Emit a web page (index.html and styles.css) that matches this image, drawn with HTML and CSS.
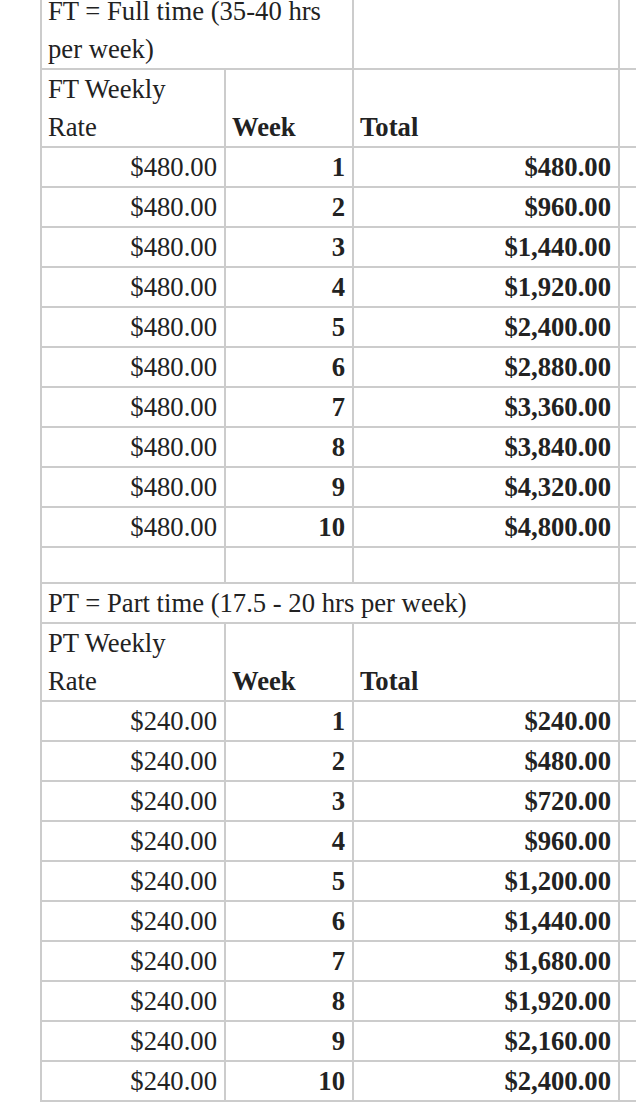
FILE: index.html
```html
<!DOCTYPE html>
<html lang="en">
<head>
<meta charset="utf-8">
<title>FT / PT weekly rates</title>
<link rel="stylesheet" href="styles.css">
</head>
<body>
<div class="sheet">
<table class="rates">
  <colgroup>
    <col class="c-rate">
    <col class="c-week">
    <col class="c-total">
    <col class="c-extra">
  </colgroup>
  <tbody>
    <tr><td colspan="2">FT = Full time (35-40 hrs per week)</td><td></td><td></td></tr>
    <tr><td>FT Weekly Rate</td><td class="b">Week</td><td class="b">Total</td><td></td></tr>
    <tr><td class="r">$480.00</td><td class="r b">1</td><td class="r b">$480.00</td><td></td></tr>
    <tr><td class="r">$480.00</td><td class="r b">2</td><td class="r b">$960.00</td><td></td></tr>
    <tr><td class="r">$480.00</td><td class="r b">3</td><td class="r b">$1,440.00</td><td></td></tr>
    <tr><td class="r">$480.00</td><td class="r b">4</td><td class="r b">$1,920.00</td><td></td></tr>
    <tr><td class="r">$480.00</td><td class="r b">5</td><td class="r b">$2,400.00</td><td></td></tr>
    <tr><td class="r">$480.00</td><td class="r b">6</td><td class="r b">$2,880.00</td><td></td></tr>
    <tr><td class="r">$480.00</td><td class="r b">7</td><td class="r b">$3,360.00</td><td></td></tr>
    <tr><td class="r">$480.00</td><td class="r b">8</td><td class="r b">$3,840.00</td><td></td></tr>
    <tr><td class="r">$480.00</td><td class="r b">9</td><td class="r b">$4,320.00</td><td></td></tr>
    <tr><td class="r">$480.00</td><td class="r b">10</td><td class="r b">$4,800.00</td><td></td></tr>
    <tr class="spacer"><td></td><td></td><td></td><td></td></tr>
    <tr><td colspan="3">PT = Part time (17.5 - 20 hrs per week)</td><td></td></tr>
    <tr><td>PT Weekly Rate</td><td class="b">Week</td><td class="b">Total</td><td></td></tr>
    <tr><td class="r">$240.00</td><td class="r b">1</td><td class="r b">$240.00</td><td></td></tr>
    <tr><td class="r">$240.00</td><td class="r b">2</td><td class="r b">$480.00</td><td></td></tr>
    <tr><td class="r">$240.00</td><td class="r b">3</td><td class="r b">$720.00</td><td></td></tr>
    <tr><td class="r">$240.00</td><td class="r b">4</td><td class="r b">$960.00</td><td></td></tr>
    <tr><td class="r">$240.00</td><td class="r b">5</td><td class="r b">$1,200.00</td><td></td></tr>
    <tr><td class="r">$240.00</td><td class="r b">6</td><td class="r b">$1,440.00</td><td></td></tr>
    <tr><td class="r">$240.00</td><td class="r b">7</td><td class="r b">$1,680.00</td><td></td></tr>
    <tr><td class="r">$240.00</td><td class="r b">8</td><td class="r b">$1,920.00</td><td></td></tr>
    <tr><td class="r">$240.00</td><td class="r b">9</td><td class="r b">$2,160.00</td><td></td></tr>
    <tr><td class="r">$240.00</td><td class="r b">10</td><td class="r b">$2,400.00</td><td></td></tr>
  </tbody>
</table>
</div>
</body>
</html>
```

FILE: styles.css
```css
html, body {
  margin: 0;
  padding: 0;
  background: #ffffff;
}

.sheet {
  width: 100%;
  overflow: hidden;
  padding-left: 40px;
  box-sizing: border-box;
}

.rates {
  margin-top: -10px;
  table-layout: fixed;
  width: 846px;
  border-collapse: separate;
  border-spacing: 0;
  border-left: 2px solid #cccccc;
  border-top: 2px solid #cccccc;
  font-family: "Liberation Serif", "Times New Roman", serif;
  font-size: 20pt;
  line-height: 38px;
  color: #222222;
}

.c-rate { width: 184px; }
.c-week { width: 128px; }
.c-total { width: 266px; }
.c-extra { width: 266px; }

.rates td {
  box-sizing: border-box;
  padding: 0 6px;
  border-right: 2px solid #cccccc;
  border-bottom: 2px solid #cccccc;
  vertical-align: bottom;
  text-align: left;
}

.rates td.r {
  text-align: right;
  padding-right: 7px;
}

.rates td.b {
  font-weight: bold;
}

.spacer td {
  height: 36px;
}
```
